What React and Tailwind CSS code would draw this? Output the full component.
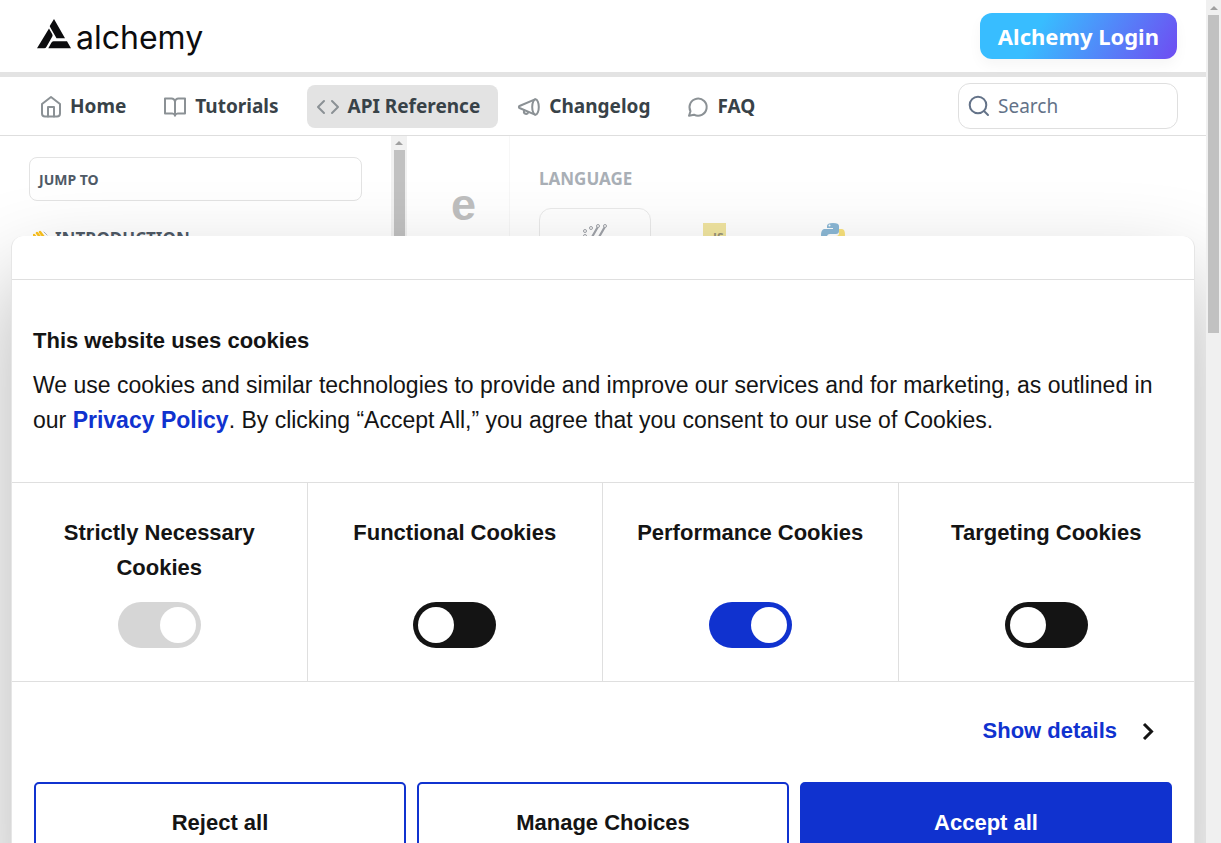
import { useState } from "react";

const iconProps = {
  fill: "none",
  stroke: "currentColor",
  strokeWidth: 2,
  strokeLinecap: "round",
  strokeLinejoin: "round",
  "aria-hidden": true,
};

function HomeIcon() {
  return (
    <svg width="22" height="24" viewBox="0 0 22 24" {...iconProps}>
      <path d="M2 10 11 3l9 7v9.500a3 3 0 0 1-3 3H5a3 3 0 0 1-3-3z" />
      <path d="M8 22.500V13h6v9.500" />
    </svg>
  );
}

function BookIcon() {
  return (
    <svg width="24" height="24" viewBox="0 0 24 24" {...iconProps}>
      <path d="M2 4.500h6.500A3.500 3.500 0 0 1 12 8a3.500 3.500 0 0 1 3.500-3.500H22v15h-7a3 3 0 0 0-3 2 3 3 0 0 0-3-2H2z" />
      <path d="M12 8v13.500" />
    </svg>
  );
}

function CodeIcon() {
  return (
    <svg width="24" height="24" viewBox="0 0 24 24" {...iconProps}>
      <path d="M8 7 2 13l6 6M16 7l6 6-6 6" />
    </svg>
  );
}

function MegaphoneIcon() {
  return (
    <svg width="24" height="24" viewBox="0 0 24 24" {...iconProps}>
      <ellipse cx="18.500" cy="13" rx="3.300" ry="7.700" />
      <path d="M18 5.300 2.500 12c-.8.400-.8 1.600 0 2L18 20.700" />
      <path d="M7 16.300v.7a2.200 2.200 0 0 0 4.300 1.200" />
    </svg>
  );
}

function ChatIcon() {
  return (
    <svg width="22" height="24" viewBox="0 0 22 24" {...iconProps}>
      <path d="M2 21.800l1.500-4.600A8.600 8.600 0 1 1 7 20.700z" />
    </svg>
  );
}

function SearchIcon() {
  return (
    <svg width="22" height="22" viewBox="0 0 22 22" {...iconProps}>
      <circle cx="10" cy="10" r="8.300" />
      <path d="m16 16 4 4" />
    </svg>
  );
}

function AlchemyMark() {
  return (
    <svg width="34" height="30" viewBox="0 0 34 30" fill="#0c0c0e" aria-hidden="true">
      <path d="M17 0 28 19.200H19.500L13.200 8.300Q12.400 7.200 13 6.500Z" />
      <path d="M12 9.500 15.300 15.200Q15.900 16.500 15.300 17.600L9.500 27.700Q8.700 29.200 7.200 29.200H0Z" />
      <path d="M14.500 22.200H30L34 29.200H11.300L14.200 24Q14.900 22.400 16.500 22.200Z" />
    </svg>
  );
}

function ScrollArrow() {
  return (
    <svg width="8" height="4" viewBox="0 0 8 4" fill="#a0a0a0" aria-hidden="true">
      <path d="M4 0 8 4H0z" />
    </svg>
  );
}

const navItems = [
  { label: "Home", Icon: HomeIcon },
  { label: "Tutorials", Icon: BookIcon },
  { label: "API Reference", Icon: CodeIcon, active: true },
  { label: "Changelog", Icon: MegaphoneIcon },
  { label: "FAQ", Icon: ChatIcon },
];

function Header() {
  return (
    <header className="font-['Noto_Sans',sans-serif]">
      <div className="flex h-[77px] items-center justify-between border-b-[5px] border-[#e3e3e3] bg-white pr-[29px] pl-[37px]">
        <a href="#home" className="flex items-start gap-[5px] text-[#0c0c0e]">
          <AlchemyMark />
          <span className="pt-[3px] font-['Inter',sans-serif] text-[32px] leading-8">alchemy</span>
        </a>
        <a
          href="#login"
          className="flex h-[46px] items-center rounded-xl bg-[linear-gradient(120deg,#38bdff_0%,#38bdff_30%,#6f4cf2_100%)] px-[18px] text-[22px] font-bold text-white shadow-[0_6px_14px_rgba(0,0,0,0.04)]"
        >
          Alchemy Login
        </a>
      </div>
      <div className="flex h-[59px] items-center justify-between border-b border-[#dedede] bg-white pr-[28px] pl-[31px]">
        <nav className="flex gap-[10px]">
          {navItems.map(({ label, Icon, active }) => (
            <a
              key={label}
              href="#nav"
              className={
                active
                  ? "flex h-[43px] items-center gap-2 rounded-lg bg-[#e3e3e3] pr-[18px] pl-[9px] text-[19px] font-bold text-[#384248]"
                  : "flex h-[43px] items-center gap-2 rounded-lg pr-[18px] pl-[9px] text-[19px] font-bold text-[#384248]"
              }
            >
              <span className="text-[#8b9195]">
                <Icon />
              </span>
              {label}
            </a>
          ))}
        </nav>
        <label className="flex h-[46px] w-[220px] items-center gap-2 rounded-xl border border-[#dfdfdf] px-[9px] text-[#637288]">
          <SearchIcon />
          <input
            type="search"
            aria-label="Search"
            placeholder="Search"
            className="min-w-0 flex-1 bg-transparent text-[19px] outline-none placeholder:text-[#637288]"
          />
        </label>
      </div>
    </header>
  );
}

function Docs() {
  return (
    <div className="flex min-h-0 flex-1 font-['Noto_Sans',sans-serif]">
      <aside className="flex w-[407px] shrink-0">
        <div className="flex-1 pt-[21px] pr-[29px] pl-[29px]">
          <button className="flex h-[44px] w-full items-center rounded-lg border border-[#e3e3e3] bg-white px-[9px] text-[14px] font-bold text-[#4f5a66]">
            JUMP TO
          </button>
          <h2 className="mt-[26px] flex items-center gap-[7px] pl-1 text-[17px] leading-6 font-bold text-[#4f5a66]">
            <svg width="15" height="18" viewBox="0 0 15 18" fill="none" strokeLinecap="round" aria-hidden="true">
              <path d="m1 5 6 8M4 3l6 8M7 2l6 8" stroke="#fcc21b" strokeWidth="2.500" />
              <path d="m11 2 3 3" stroke="#b0b8bf" />
            </svg>
            INTRODUCTION
          </h2>
        </div>
        <div className="flex w-4 flex-col items-center bg-[#f1f1f1] pt-[5px]" aria-hidden="true">
          <ScrollArrow />
          <div className="mt-[5px] w-[11px] flex-1 bg-[#c1c1c1]" />
        </div>
      </aside>
      <main className="w-[102px] shrink-0 pt-[39px] pl-[44px] font-['Liberation_Sans',sans-serif] text-[45px] leading-[60px] font-bold text-[#bfbfbf]">
        e
      </main>
      <section className="flex-1 border-l border-[#f7f7f7] pt-[31px] pl-[29px]">
        <h3 className="text-[17px] leading-6 font-bold text-[#a9afb6]">LANGUAGE</h3>
        <div className="mt-[17px] flex gap-[7px]">
          <button aria-label="Shell" className="flex h-20 w-[112px] justify-center rounded-xl border border-[#eaeaea] pt-[13px]">
            <svg width="26" height="30" viewBox="0 0 26 30" fill="none" stroke="#a0a3a9" aria-hidden="true">
              <circle cx="3" cy="9" r="1.500" />
              <circle cx="9" cy="6" r="1.500" />
              <circle cx="3" cy="14" r="1.500" />
              <path d="M15.500 5.500 6 22M22.500 5.500 13 22" strokeWidth="2.200" />
              <circle cx="16" cy="4" r="1.500" />
              <circle cx="23" cy="4" r="1.500" />
            </svg>
          </button>
          <button aria-label="JavaScript" className="flex h-20 w-[112px] justify-center pt-[15px]">
            <span className="flex h-[23px] w-[23px] items-end justify-end bg-[#f1e5a0] pr-[2px] text-[12px] leading-4 font-bold text-[#999375]">
              JS
            </span>
          </button>
          <button aria-label="Python" className="flex h-20 w-[112px] justify-center pt-[15px]">
            <svg width="24" height="24" viewBox="0 0 24 24" aria-hidden="true">
              <path fill="#8bb8d6" d="M6 3q0-3 6-3t6 3v5q0 3-3 3H9q-3 0-3 3v3H3q-3 0-3-5t3-6h9V5H6z" />
              <path fill="#f9e27c" d="M18 21q0 3-6 3t-6-3v-5q0-3 3-3h6q3 0 3-3V6h3q3 0 3 6t-3 6h-9v1h6z" />
              <circle cx="8.500" cy="2.500" r="1" fill="#fff" />
            </svg>
          </button>
        </div>
      </section>
    </div>
  );
}

function Toggle({ label, checked, disabled, onChange }) {
  return (
    <label className="flex flex-col items-center gap-[17px] border-r border-[#dfdfdf] px-6 pt-8 pb-[33px] text-center text-[22px] leading-[35px] font-bold last:border-r-0">
      <span className="flex min-h-[70px] items-start">{label}</span>
      <input
        type="checkbox"
        role="switch"
        checked={checked}
        disabled={disabled}
        onChange={onChange}
        className="h-[46px] w-[83px] appearance-none rounded-full bg-[#141414] p-[5px] before:block before:h-9 before:w-9 before:rounded-full before:bg-white before:content-[''] checked:bg-[#1032cf] checked:before:ml-auto disabled:bg-[#d6d6d6]"
      />
    </label>
  );
}

function CookieDialog() {
  const [choices, setChoices] = useState({ functional: false, performance: true, targeting: false });
  const flip = (key) => () => setChoices((c) => ({ ...c, [key]: !c[key] }));

  return (
    <div
      role="dialog"
      aria-labelledby="cookie-title"
      className="absolute inset-x-[11px] top-[236px] rounded-t-xl border-x border-[#e6e6e6] bg-white font-['Liberation_Sans',sans-serif] text-[#141414] shadow-[0_44px_94px_rgba(0,0,0,0.3)]"
    >
      <div className="h-11 border-b border-[#dfdfdf]" />
      <div className="border-b border-[#dfdfdf] px-[21px] pt-[43px] pb-11">
        <h2 id="cookie-title" className="mb-[10px] text-[22px] leading-[35px] font-bold">
          This website uses cookies
        </h2>
        <p className="text-[23px] leading-[35px]">
          We use cookies and similar technologies to provide and improve our services and for marketing, as outlined in
          our{" "}
          <a href="#privacy" className="font-bold text-[#1032cf]">
            Privacy Policy
          </a>
          . By clicking “Accept All,” you agree that you consent to our use of Cookies.
        </p>
      </div>
      <div className="grid grid-cols-4 border-b border-[#dfdfdf]">
        <Toggle label="Strictly Necessary Cookies" checked disabled onChange={() => {}} />
        <Toggle label="Functional Cookies" checked={choices.functional} onChange={flip("functional")} />
        <Toggle label="Performance Cookies" checked={choices.performance} onChange={flip("performance")} />
        <Toggle label="Targeting Cookies" checked={choices.targeting} onChange={flip("targeting")} />
      </div>
      <div className="flex h-[100px] items-center justify-end pr-[39px] pb-[3px]">
        <a href="#details" className="flex items-center gap-[25px] text-[22px] font-bold text-[#1032cf]">
          Show details
          <svg width="13" height="18" viewBox="0 0 13 18" fill="none" stroke="#141414" strokeWidth="3" aria-hidden="true">
            <path d="m2 2 7.500 7.500L2 17" />
          </svg>
        </a>
      </div>
      <div className="grid grid-cols-3 gap-[11px] px-[22px] pb-6 text-[22px] font-bold">
        <button className="h-20 rounded-[5px] border-2 border-[#1032cf]">Reject all</button>
        <button className="h-20 rounded-[5px] border-2 border-[#1032cf]">Manage Choices</button>
        <button className="h-20 rounded-[5px] border-2 border-[#1032cf] bg-[#1032cf] text-white">Accept all</button>
      </div>
    </div>
  );
}

export default function App() {
  return (
    <div className="flex h-screen overflow-hidden bg-white">
      <div className="relative flex min-w-0 flex-1 flex-col overflow-hidden">
        <Header />
        <Docs />
        <CookieDialog />
      </div>
      <div className="flex w-[15px] shrink-0 flex-col items-center bg-[#f0f0f0] pt-[6px]" aria-hidden="true">
        <ScrollArrow />
        <div className="mt-[5px] h-[38%] w-[11px] bg-[#c1c1c1]" />
      </div>
    </div>
  );
}
